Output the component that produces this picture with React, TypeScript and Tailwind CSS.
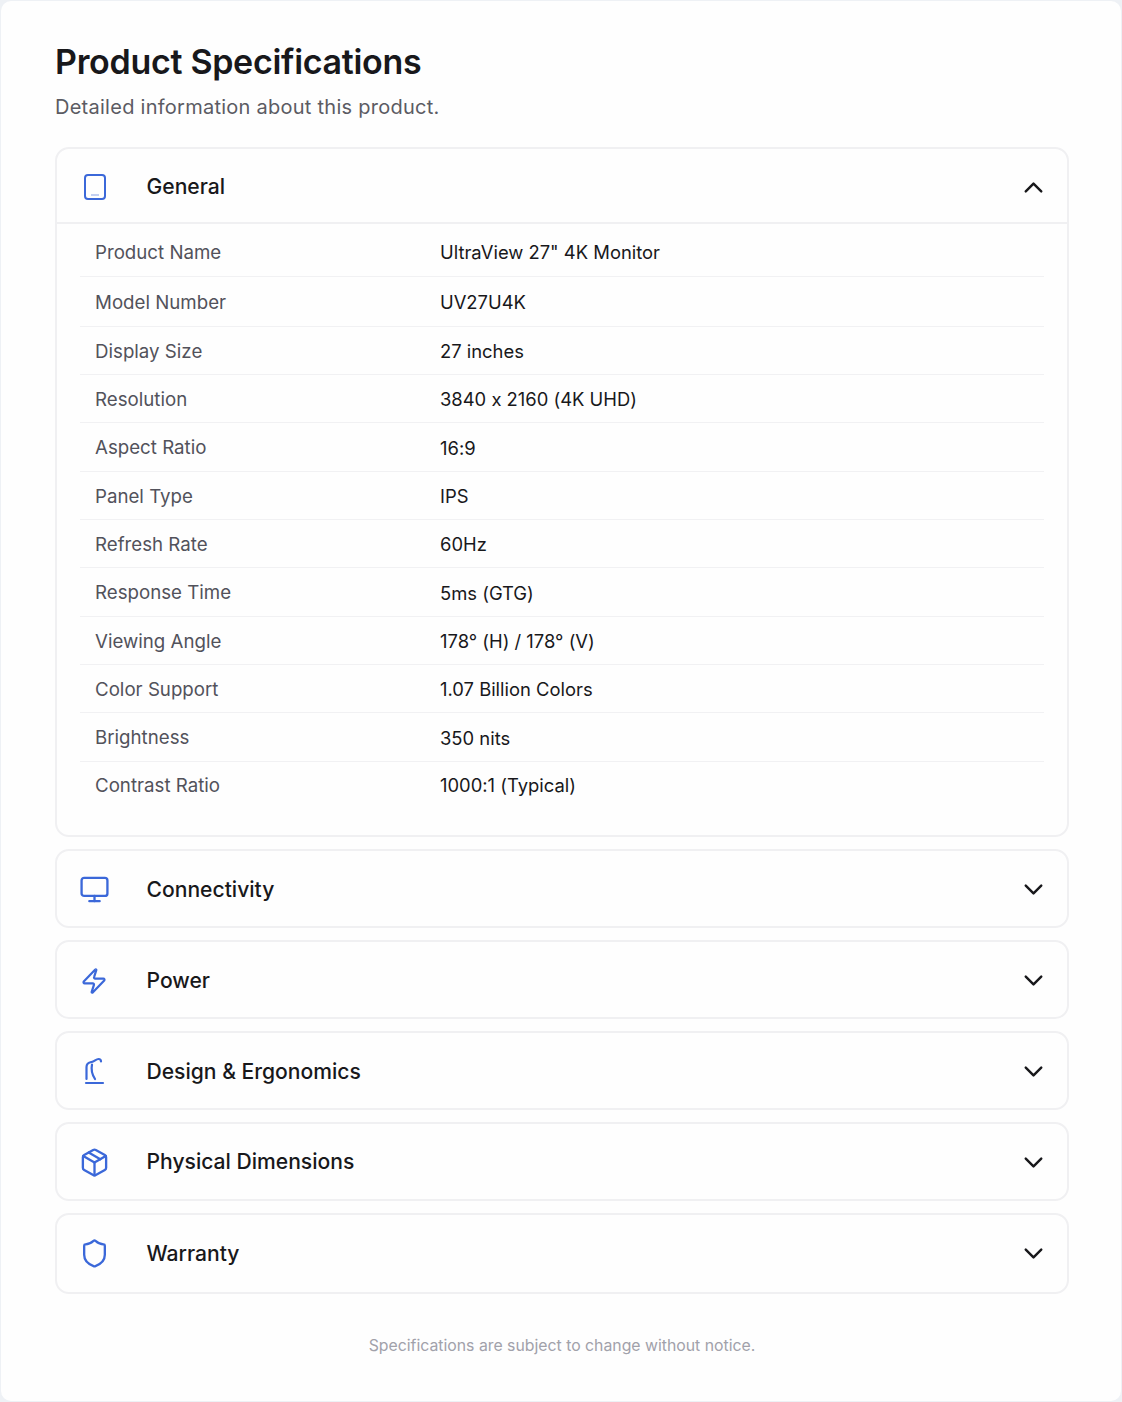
import { ChevronDown, ChevronUp, Monitor, Zap, Package, Shield } from 'lucide-react';
import type { ReactNode } from 'react';

const generalSpecs = [
  { label: 'Product Name', value: 'UltraView 27" 4K Monitor', row: 'h-[53px] pt-[6px]' },
  { label: 'Model Number', value: 'UV27U4K', row: 'h-[50px] pt-[3px]' },
  { label: 'Display Size', value: '27 inches', row: 'h-[48px] pt-[3px]' },
  { label: 'Resolution', value: '3840 x 2160 (4K UHD)', row: 'h-[48px] pt-[3px]' },
  { label: 'Aspect Ratio', value: '16:9', row: 'h-[49px] pt-[3px]' },
  { label: 'Panel Type', value: 'IPS', row: 'h-[48px] pt-[3px]' },
  { label: 'Refresh Rate', value: '60Hz', row: 'h-[48px] pt-[3px]' },
  { label: 'Response Time', value: '5ms (GTG)', row: 'h-[49px] pt-[3px]' },
  { label: 'Viewing Angle', value: '178° (H) / 178° (V)', row: 'h-[48px] pt-[3px]' },
  { label: 'Color Support', value: '1.07 Billion Colors', row: 'h-[48px] pt-[3px]' },
  { label: 'Brightness', value: '350 nits', row: 'h-[49px] pt-[3px]' },
  { label: 'Contrast Ratio', value: '1000:1 (Typical)', row: 'h-[48px]' },
];

function TabletIcon() {
  return (
    <svg className="ml-px" width="24" height="28" viewBox="0 0 24 28" fill="none" stroke="currentColor" strokeWidth="2">
      <rect x="2" y="2" width="20" height="24" rx="3" />
      <path d="M8 22h8" strokeWidth="1.2" opacity="0.5" />
    </svg>
  );
}

function DeskIcon() {
  return (
    <svg className="ml-px" width="24" height="30" viewBox="0 0 24 30" fill="none" stroke="currentColor" strokeWidth="2.2" strokeLinecap="round" strokeLinejoin="round">
      <path d="M3.500 22V10c0-3 2-4.500 5-5" />
      <path d="M8.500 5c3-.5 4.500-3 7-3 1.500 0 2.500 1 2.500 2.500" />
      <path d="M9 7.500c-1 5 0 10 3 14.500" />
      <path d="M3 26h17" />
    </svg>
  );
}

function SpecSection({ icon, title, open, children, height, offset }: { icon: ReactNode; title: string; open?: boolean; children?: ReactNode; height: string; offset: string }) {
  return (
    <section className="rounded-[14px] border-2 border-[#f0f0f2] bg-[#fefefe]">
      <div className={`flex items-center pl-[20px] pr-[18px] ${height} ${offset} ${open ? 'border-b-2 border-[#f0f0f2]' : ''}`}>
        <div className="flex w-[34px] justify-center text-[#3b68d9]">{icon}</div>
        <span className="ml-[35.500px] flex-1 text-[21.100px] font-medium text-[#18181b]">{title}</span>
        {open ? <ChevronUp size={31} strokeWidth={1.9} className="text-[#18181b]" /> : <ChevronDown size={31} strokeWidth={1.9} className="text-[#18181b]" />}
      </div>
      {children}
    </section>
  );
}

export default function App() {
  return (
    <div className="h-[1402px] bg-[#eef1f5] p-px font-['Inter',sans-serif] [font-feature-settings:'calt'_0]">
      <div className="h-full rounded-[10px] bg-[#fefefe] pl-[54px] pr-[52px] pt-[39px]">
        <h1 className="text-[34px] leading-[44px] font-semibold tracking-[-0.3px] text-[#18181b]">Product Specifications</h1>
        <p className="mt-[8px] text-[20px] leading-[30px] tracking-[0.26px] text-[#5b5b63]">Detailed information about this product.</p>

        <div className="mt-[25px] flex flex-col gap-[12px]">
          <SpecSection icon={<TabletIcon />} title="General" open height="h-[75px]" offset="pt-[3px]">
            <div className="px-[23px] pb-[25px]">
              {generalSpecs.map((spec, i) => (
                <div
                  key={spec.label}
                  className={`flex items-center ${spec.row} ${i < generalSpecs.length - 1 ? 'border-b border-[#f1f1f3]' : ''}`}
                >
                  <span className="w-[360px] pl-[15px] text-[18.700px] text-[#52525b]">{spec.label}</span>
                  <span className="text-[18.400px] text-[#18181b]">{spec.value}</span>
                </div>
              ))}
            </div>
          </SpecSection>
          <SpecSection icon={<Monitor size={31} strokeWidth={1.8} />} title="Connectivity" height="h-[75px]" offset="pt-[2px]" />
          <SpecSection icon={<Zap size={28} strokeWidth={1.9} />} title="Power" height="h-[75px]" offset="pt-[2px]" />
          <SpecSection icon={<DeskIcon />} title="Design & Ergonomics" height="h-[75px]" offset="pt-[2px]" />
          <SpecSection icon={<Package size={31} strokeWidth={1.8} />} title="Physical Dimensions" height="h-[75px]" offset="pt-[1px]" />
          <SpecSection icon={<Shield size={31} strokeWidth={1.8} />} title="Warranty" height="h-[77px]" offset="pt-0" />
        </div>

        <p className="mt-[40px] text-center text-[15.800px] leading-[24px] text-[#a1a1aa]">Specifications are subject to change without notice.</p>
      </div>
    </div>
  );
}
